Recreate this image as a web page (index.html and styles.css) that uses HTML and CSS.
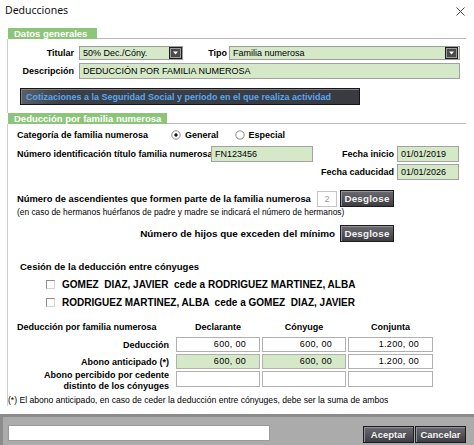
FILE: index.html
```html
<!DOCTYPE html>
<html lang="es">
<head>
<meta charset="utf-8">
<title>Deducciones</title>
<link rel="stylesheet" href="styles.css">
</head>
<body>
<div class="titlebar">
  <span class="title">Deducciones</span>
  <svg class="close" width="9" height="9" viewBox="0 0 9 9"><path d="M0.5 0.5L8.5 8.5M8.5 0.5L0.5 8.5" stroke="#444" stroke-width="1"/></svg>
</div>

<section class="sec">
  <div class="sec-head"><span class="tab tab1">Datos generales</span><span class="rule"></span></div>
  <div class="panel panel1">
    <div class="row r-titular">
      <span class="lbl lbl-main">Titular</span>
      <div class="select sel-titular"><span class="val">50% Dec./Cóny.</span>
        <svg class="drop" width="13" height="12" viewBox="0 0 13 12"><rect x="0.5" y="0.5" width="12" height="11" fill="#4a4a4c" stroke="#1e1e1e"/><rect x="1.5" y="1.5" width="10" height="9" fill="none" stroke="#9c9c9c"/><path d="M4 4.5h5l-2.5 3z" fill="#fff"/></svg>
      </div>
      <span class="lbl lbl-tipo">Tipo</span>
      <div class="select sel-tipo"><span class="val">Familia numerosa</span>
        <svg class="drop" width="13" height="12" viewBox="0 0 13 12"><rect x="0.5" y="0.5" width="12" height="11" fill="#4a4a4c" stroke="#1e1e1e"/><rect x="1.5" y="1.5" width="10" height="9" fill="none" stroke="#9c9c9c"/><path d="M4 4.5h5l-2.5 3z" fill="#fff"/></svg>
      </div>
    </div>
    <div class="row r-desc">
      <span class="lbl lbl-main">Descripción</span>
      <div class="field field-desc">DEDUCCIÓN POR FAMILIA NUMEROSA</div>
    </div>
    <div class="row r-cotiz">
      <button class="btn-cotiz">Cotizaciones a la Seguridad Social y período en el que realiza actividad</button>
    </div>
  </div>
</section>

<section class="sec">
  <div class="sec-head"><span class="tab tab2">Deducción por familia numerosa</span><span class="rule"></span></div>
  <div class="panel panel2">
    <div class="row r-cat">
      <span class="lbl">Categoría de familia numerosa</span>
      <svg class="radio radio1" width="10" height="10" viewBox="0 0 10 10"><circle cx="5" cy="5" r="4.2" fill="#fff" stroke="#8c8c8c"/><circle cx="5" cy="5" r="1.7" fill="#111"/></svg>
      <span class="lbl">General</span>
      <svg class="radio radio2" width="10" height="10" viewBox="0 0 10 10"><circle cx="5" cy="5" r="4.2" fill="#fff" stroke="#8c8c8c"/></svg>
      <span class="lbl">Especial</span>
    </div>

    <div class="idgrid">
      <span class="lbl">Número identificación título familia numerosa</span>
      <div class="field">FN123456</div>
      <span class="lbl lbl-r">Fecha inicio</span>
      <div class="field">01/01/2019</div>
      <span></span>
      <span></span>
      <span class="lbl lbl-r">Fecha caducidad</span>
      <div class="field">01/01/2026</div>
    </div>

    <div class="row r-asc">
      <span class="lbl asc-label">Número de ascendientes que formen parte de la familia numerosa</span>
      <div class="field field-num">2</div>
      <button class="btn btn-desg">Desglose</button>
    </div>
    <div class="note">(en caso de hermanos huérfanos de padre y madre se indicará el número de hermanos)</div>

    <div class="row r-hijos">
      <span class="lbl hijos-label">Número de hijos que exceden del mínimo</span>
      <button class="btn btn-desg">Desglose</button>
    </div>

    <div class="row r-cesion"><span class="lbl cesion">Cesión de la deducción entre cónyuges</span></div>
    <div class="row r-chk"><span class="chk"></span><span class="lbl chk-text">GOMEZ  DIAZ, JAVIER  cede a RODRIGUEZ MARTINEZ, ALBA</span></div>
    <div class="row r-chk"><span class="chk"></span><span class="lbl chk-text">RODRIGUEZ MARTINEZ, ALBA  cede a GOMEZ  DIAZ, JAVIER</span></div>

    <div class="tgrid thead">
      <span class="lbl th-first">Deducción por familia numerosa</span>
      <span class="lbl th">Declarante</span>
      <span class="lbl th">Cónyuge</span>
      <span class="lbl th">Conjunta</span>
    </div>
    <div class="tgrid trow">
      <span class="lbl tl">Deducción</span>
      <div class="cell">600, 00</div>
      <div class="cell">600, 00</div>
      <div class="cell">1.200, 00</div>
    </div>
    <div class="tgrid trow">
      <span class="lbl tl">Abono anticipado (*)</span>
      <div class="cell green">600, 00</div>
      <div class="cell green">600, 00</div>
      <div class="cell">1.200, 00</div>
    </div>
    <div class="tgrid trow trow3">
      <span class="lbl tl tl2">Abono percibido por cedente<br>distinto de los cónyuges</span>
      <div class="cell"></div>
      <div class="cell"></div>
      <div class="cell"></div>
    </div>

    <div class="foot">(*) El abono anticipado, en caso de ceder la deducción entre cónyuges, debe ser la suma de ambos</div>
  </div>
</section>

<div class="band">
  <div class="band-input"></div>
  <button class="btn btn-ok">Aceptar</button>
  <button class="btn btn-cancel">Cancelar</button>
</div>
</body>
</html>
```

FILE: styles.css
```css
* { box-sizing: border-box; }
html, body { margin: 0; padding: 0; }
body {
  width: 474px;
  height: 445px;
  overflow: hidden;
  background: #ffffff;
  font-family: "Liberation Sans", Arial, sans-serif;
  font-size: 9px;
  color: #000;
}

.titlebar {
  height: 28px;
  display: flex;
  justify-content: space-between;
  align-items: flex-start;
  padding: 3px 9px 0 5px;
}
.title { font-family: "Noto Sans", "Liberation Sans", sans-serif; font-size: 10.5px; line-height: 14px; color: #111; }
.close { margin-top: 4px; }

.sec { margin: 0 8px 0 7px; }
.sec-head { display: flex; height: 11px; padding-left: 1px; }
.tab {
  background: #8cc57a;
  color: #fff;
  font-weight: bold;
  font-size: 9.5px;
  line-height: 11px;
  padding-left: 6px;
  white-space: nowrap;
}
.tab1 { width: 89px; }
.tab2 { width: 159px; }
.rule { flex: 1; border-bottom: 1px solid #b8b8b8; }

.panel { border-left: 1px solid #d0d0d0; }
.panel1 { padding: 7px 0 8px 0; }
.panel2 { padding: 5px 0 0 0; }

.row { display: flex; align-items: center; white-space: nowrap; }
.lbl { font-weight: bold; white-space: nowrap; }

.r-titular { height: 14px; }
.lbl-main { width: 66px; text-align: right; }
.select {
  height: 14px;
  border: 1px solid #9c9c9c;
  background: #d5e9c9;
  display: flex;
  align-items: center;
  padding-left: 3px;
}
.select .val { flex: 1; }
.sel-titular { margin-left: 5px; width: 104px; }
.lbl-tipo { width: 46px; text-align: right; padding-right: 2px; }
.sel-tipo { width: 231px; }
.sel-tipo .drop { margin-right: 1px; }

.field {
  height: 16px;
  border: 1px solid #a2a2a2;
  background: #d5e9c9;
  padding-left: 3px;
  line-height: 14px;
  white-space: nowrap;
  overflow: hidden;
}
.r-desc { margin-top: 3px; height: 16px; }
.field-desc { margin-left: 5px; width: 381px; }

.r-cotiz { margin-top: 9px; padding-left: 12px; }
.btn-cotiz {
  width: 340px;
  height: 17px;
  padding: 0 0 0 5px;
  text-align: left;
  font-family: inherit;
  font-weight: bold;
  font-size: 9px;
  color: #58a7ee;
  background: linear-gradient(90deg, #5b6068 0%, #3c3f46 12%, #393b41 100%);
  border: 1px solid #151515;
  box-shadow: inset 1px 1px 0 #7d838c;
  white-space: nowrap;
}

.r-cat { height: 12px; padding-left: 9px; }
.radio1 { margin-left: 23px; margin-right: 4px; }
.radio2 { margin-left: 16px; margin-right: 4px; }

.idgrid {
  margin-top: 5px;
  padding-left: 9px;
  display: grid;
  grid-template-columns: 194px 102px 84px 62px;
  grid-auto-rows: 16px;
  row-gap: 2px;
  align-items: center;
}
.lbl-r { text-align: right; padding-right: 3px; }

.btn {
  font-family: inherit;
  font-weight: bold;
  color: #f2f2f2;
  background: linear-gradient(#6b6b71, #3d3d43);
  border: 1px solid #1b1b1b;
  box-shadow: inset 1px 1px 0 #92929a;
  padding: 0;
  height: 17px;
  white-space: nowrap;
}
.btn-desg { width: 54px; font-size: 9.8px; letter-spacing: 0.2px; }

.r-asc { margin-top: 10px; height: 17px; padding-left: 9px; }
.asc-label { width: 295px; font-size: 9.4px; }
.field-num {
  width: 20px;
  margin-left: 5px;
  margin-right: 3px;
  background: #fff;
  color: #9a9a9a;
  border-color: #c4c4c4;
  text-align: center;
  padding-left: 0;
}
.note { font-size: 8.4px; line-height: 10px; padding-left: 9px; white-space: nowrap; }

.r-hijos { margin-top: 8px; height: 17px; }
.hijos-label { width: 327px; text-align: right; margin-right: 5px; font-size: 9.9px; }

.r-cesion { margin-top: 18px; height: 12px; padding-left: 12px; }
.cesion { font-size: 9.5px; }
.r-chk { margin-top: 6px; height: 12px; padding-left: 38px; }
.chk {
  width: 9px;
  height: 9px;
  background: #fff;
  border-top: 1px solid #8c8c8c;
  border-left: 1px solid #8c8c8c;
  border-right: 1px solid #d4d4d4;
  border-bottom: 1px solid #d4d4d4;
  margin-right: 7px;
}
.chk-text { font-size: 10px; white-space: pre; }

.tgrid {
  display: grid;
  grid-template-columns: 166px 84px 84px 85px;
  column-gap: 2px;
  align-items: center;
}
.thead { margin-top: 13px; height: 12px; }
.th-first { padding-left: 9px; }
.th { text-align: center; }
.trow { margin-top: 2px; height: 15px; }
.thead + .trow { margin-top: 4px; }
.tl { text-align: right; padding-right: 5px; }
.cell {
  height: 15px;
  border: 1px solid #b0b0b0;
  background: #fff;
  text-align: right;
  padding-right: 13px;
  line-height: 13px;
  letter-spacing: 0.3px;
}
.cell.green { background: #d5e9c9; }
.trow3 { margin-top: 1px; height: 22px; align-items: start; }
.trow3 .cell { height: 16px; margin-top: 1px; }
.tl2 { line-height: 11px; }

.foot { margin-top: 2px; line-height: 12px; font-size: 8.6px; white-space: nowrap; }

.band {
  margin-top: 8px;
  height: 31px;
  background: #ababab;
  border-top: 3px solid #8c8c8c;
  border-left: 3px solid #8c8c8c;
  display: flex;
  align-items: flex-start;
  padding: 8px 8px 0 5px;
}
.band-input { width: 262px; height: 16px; background: #fff; border: 1px solid #9a9a9a; }
.btn-ok { margin-left: auto; margin-top: 1px; width: 51px; font-size: 9.5px; }
.btn-cancel { margin-left: 1px; margin-top: 1px; width: 51px; font-size: 9.5px; }
```
